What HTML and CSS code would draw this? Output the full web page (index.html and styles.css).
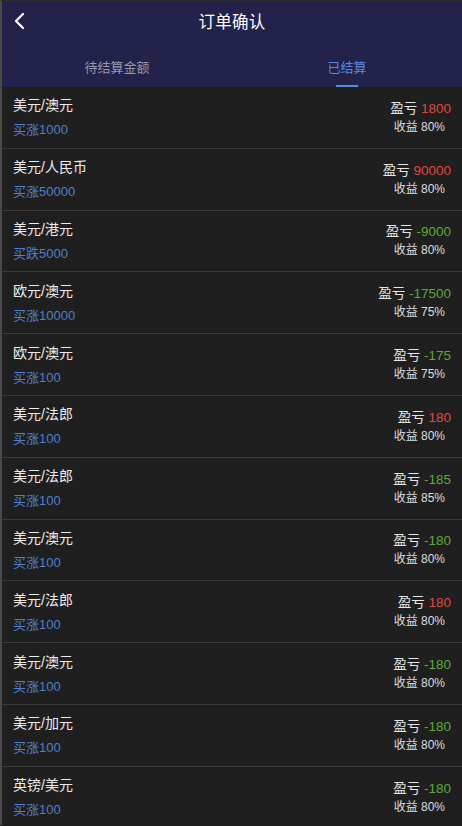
FILE: index.html
```html
<!DOCTYPE html>
<html lang="zh">
  <head>
    <meta charset="UTF-8" />
    <title>订单确认</title>
    <link rel="stylesheet" href="styles.css">
  </head>
  <body>
    <div id="page">
      <div class="header">
        <div class="title-bar">
          <span class="back">
            <svg width="12" height="18" viewBox="0 0 12 18"><polyline points="9,2 2,9 9,16" fill="none" stroke="#fff" stroke-width="2.2" stroke-linecap="round" stroke-linejoin="round"/></svg>
          </span>
          <h1>订单确认</h1>
        </div>
        <div class="tabs">
          <div class="tab">待结算金额</div>
          <div class="tab active">已结算</div>
        </div>
      </div>
      <div id="order-list"></div>
    </div>

    <script>
      const orders = [
        ["美元/澳元", "买涨1000", "1800", "80%"],
        ["美元/人民币", "买涨50000", "90000", "80%"],
        ["美元/港元", "买跌5000", "-9000", "80%"],
        ["欧元/澳元", "买涨10000", "-17500", "75%"],
        ["欧元/澳元", "买涨100", "-175", "75%"],
        ["美元/法郎", "买涨100", "180", "80%"],
        ["美元/法郎", "买涨100", "-185", "85%"],
        ["美元/澳元", "买涨100", "-180", "80%"],
        ["美元/法郎", "买涨100", "180", "80%"],
        ["美元/澳元", "买涨100", "-180", "80%"],
        ["美元/加元", "买涨100", "-180", "80%"],
        ["英镑/美元", "买涨100", "-180", "80%"]
      ];

      const list = document.getElementById("order-list");
      orders.forEach(function (o) {
        const row = document.createElement("div");
        row.className = "order-row";
        const cls = o[2].charAt(0) === "-" ? "loss" : "win";
        row.innerHTML =
          '<div class="left"><div class="pair">' + o[0] + '</div>' +
          '<div class="bet">' + o[1] + '</div></div>' +
          '<div class="right"><div class="pl">盈亏 <span class="' + cls + '">' + o[2] + '</span></div>' +
          '<div class="rate">收益 ' + o[3] + '</div></div>';
        list.appendChild(row);
      });
    </script>
  </body>
</html>
```
FILE: styles.css
```css
body {
  margin: 0;
  background: #1f1f1f;
  font-family: "Liberation Sans", "Noto Sans CJK SC", sans-serif;
  color: #e6e6e6;
}
#page {
  border-left: 2px solid #4a4a4a;
  border-top: 1px solid #2c2c2c;
  height: 825px;
  overflow: hidden;
  box-sizing: border-box;
}
.header {
  background: #22224a;
}
.title-bar {
  height: 40px;
  display: flex;
  align-items: center;
  justify-content: center;
  position: relative;
}
.back {
  position: absolute;
  left: 12px;
  top: 11px;
  display: flex;
}
h1 {
  margin: 0;
  font-size: 16.5px;
  font-weight: 400;
  color: #fff;
  letter-spacing: 0.3px;
}
.tabs {
  display: grid;
  grid-template-columns: 1fr 1fr;
}
.tab {
  justify-self: center;
  padding-top: 17px;
  line-height: 20px;
  font-size: 13px;
  color: #9a9aaa;
  padding-bottom: 9px;
}
.tab.active {
  color: #5a8ae0;
  position: relative;
}
.tab.active::after {
  content: "";
  position: absolute;
  left: 50%;
  bottom: 0;
  width: 22px;
  height: 2px;
  margin-left: -11px;
  background: #5a8ae0;
}
.order-row {
  height: 60.8px;
  border-bottom: 1px solid #3a3a3a;
  display: flex;
  align-items: center;
  justify-content: space-between;
  padding: 0 11px 0 11px;
}
.left {
  display: flex;
  flex-direction: column;
  gap: 7px;
}
.pair {
  font-size: 14px;
  line-height: 18px;
  color: #ececec;
}
.bet {
  font-size: 13px;
  line-height: 17px;
  color: #4f7fce;
}
.right {
  display: flex;
  flex-direction: column;
  align-items: flex-end;
  gap: 2px;
}
.pl {
  font-size: 13.5px;
  line-height: 17px;
  color: #e6e6e6;
}
.rate {
  font-size: 12px;
  line-height: 16px;
  color: #dedede;
  padding-right: 6px;
}
.win {
  color: #e0483f;
}
.loss {
  color: #5da83a;
}
```
